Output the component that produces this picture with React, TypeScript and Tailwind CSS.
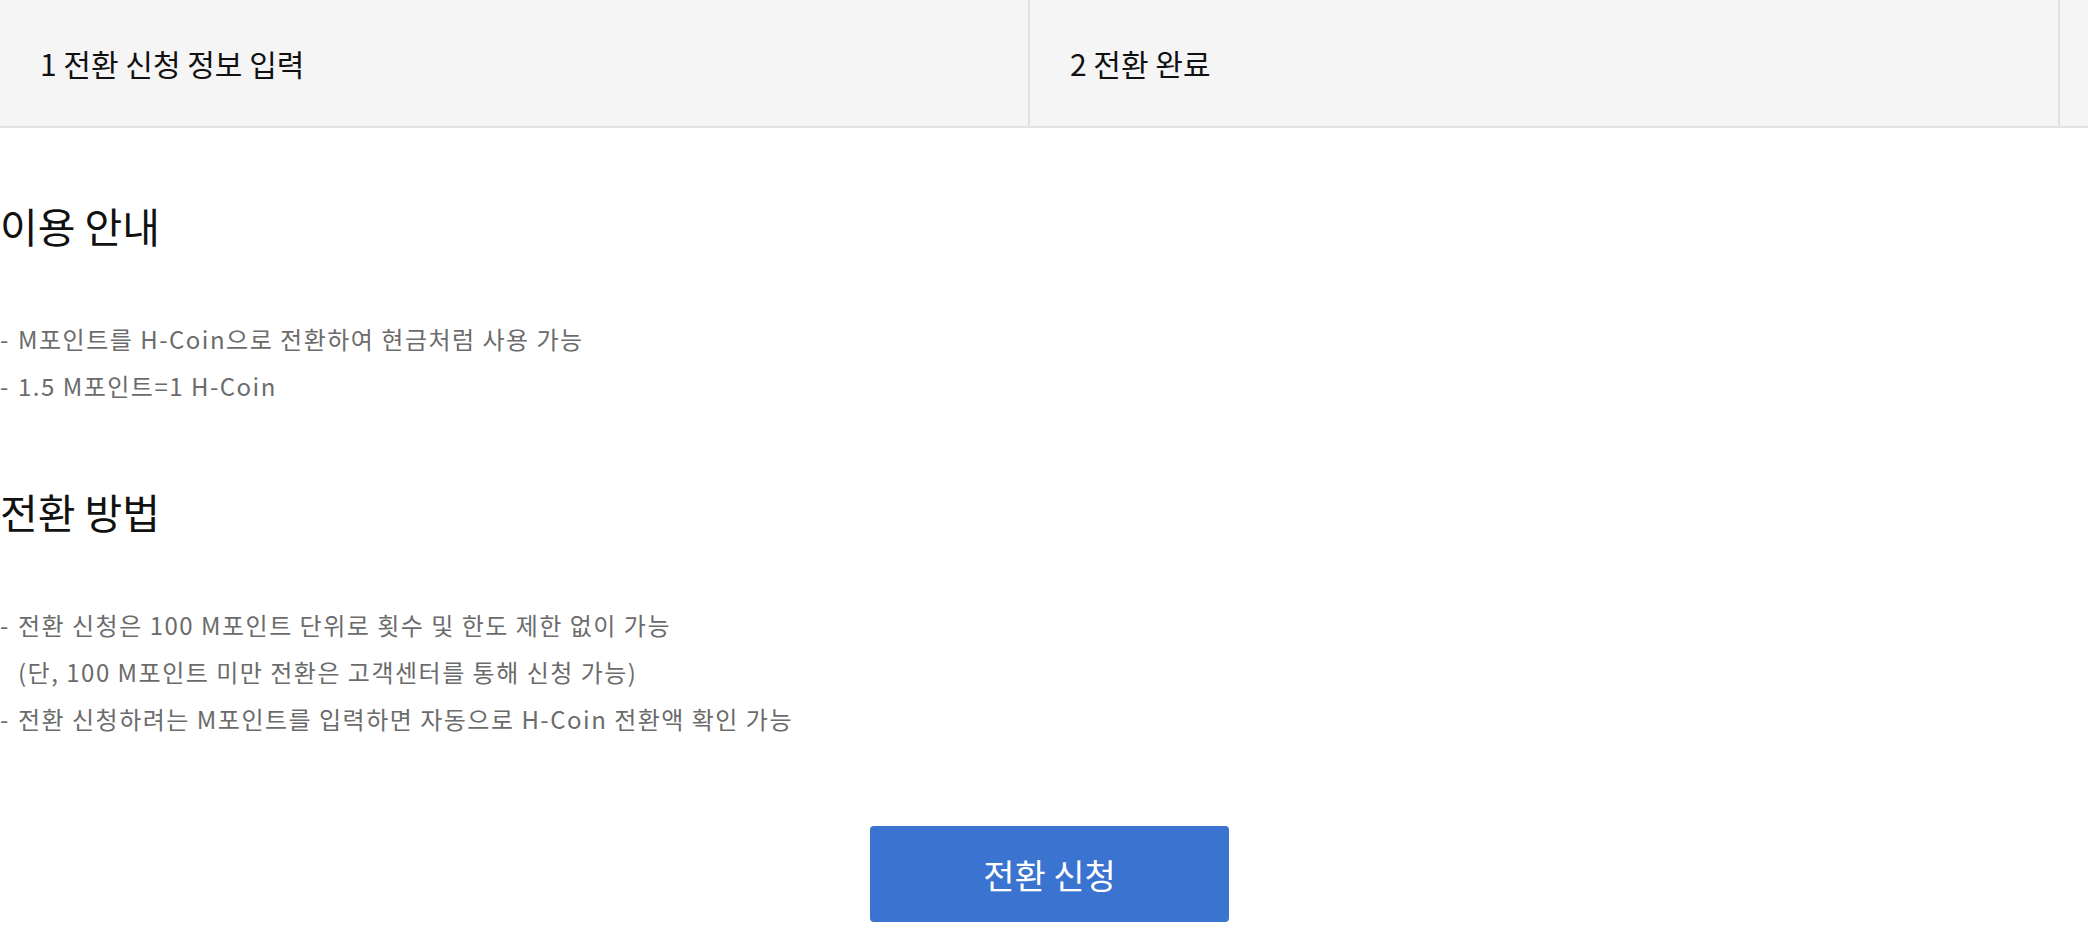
import React from "react";

const steps = ["1 전환 신청 정보 입력", "2 전환 완료", ""];

const guide = ["M포인트를 H-Coin으로 전환하여 현금처럼 사용 가능", "1.5 M포인트=1 H-Coin"];

const method = [
  ["전환 신청은 100 M포인트 단위로 횟수 및 한도 제한 없이 가능", "(단, 100 M포인트 미만 전환은 고객센터를 통해 신청 가능)"],
  ["전환 신청하려는 M포인트를 입력하면 자동으로 H-Coin 전환액 확인 가능"],
];

function Bullet({ lines }: { lines: string[] }) {
  return (
    <li className="flex">
      <span className="w-[18px] shrink-0 tracking-normal">-</span>
      <div>
        {lines.map((l) => (
          <div key={l}>{l}</div>
        ))}
      </div>
    </li>
  );
}

export default function App() {
  return (
    <div
      className="min-h-screen bg-white overflow-hidden"
      style={{ fontFamily: '"Noto Sans CJK KR", "Noto Sans", sans-serif' }}
    >
      {/* Steps */}
      <div className="flex w-[2100px] border-b-2 border-[#e3e3e3] bg-[#f5f5f5]">
        {steps.map((s, i) => (
          <div
            key={i}
            className="w-[1030px] shrink-0 h-[126px] border-r-2 border-[#e3e3e3] pl-[40px] flex items-center text-[30px] text-[#111]"
          >
            {s}
          </div>
        ))}
      </div>

      {/* Content */}
      <main className="pt-[69px]">
        <h2 className="text-[41px] leading-[57px] text-[#111]">이용 안내</h2>
        <ul className="mt-[61px] text-[24px] tracking-[1.5px] leading-[47px] text-[#6b6b6b]">
          {guide.map((g) => (
            <Bullet key={g} lines={[g]} />
          ))}
        </ul>

        <h2 className="mt-[74px] text-[41px] leading-[57px] text-[#111]">전환 방법</h2>
        <ul className="mt-[61px] text-[24px] tracking-[1.5px] leading-[47px] text-[#6b6b6b]">
          {method.map((m) => (
            <Bullet key={m[0]} lines={m} />
          ))}
        </ul>

        <div className="mt-[84px] flex justify-center pl-[11px]">
          <button className="w-[359px] h-[96px] rounded-[4px] bg-[#3a73d0] text-white text-[34px]">
            전환 신청
          </button>
        </div>
      </main>
    </div>
  );
}
